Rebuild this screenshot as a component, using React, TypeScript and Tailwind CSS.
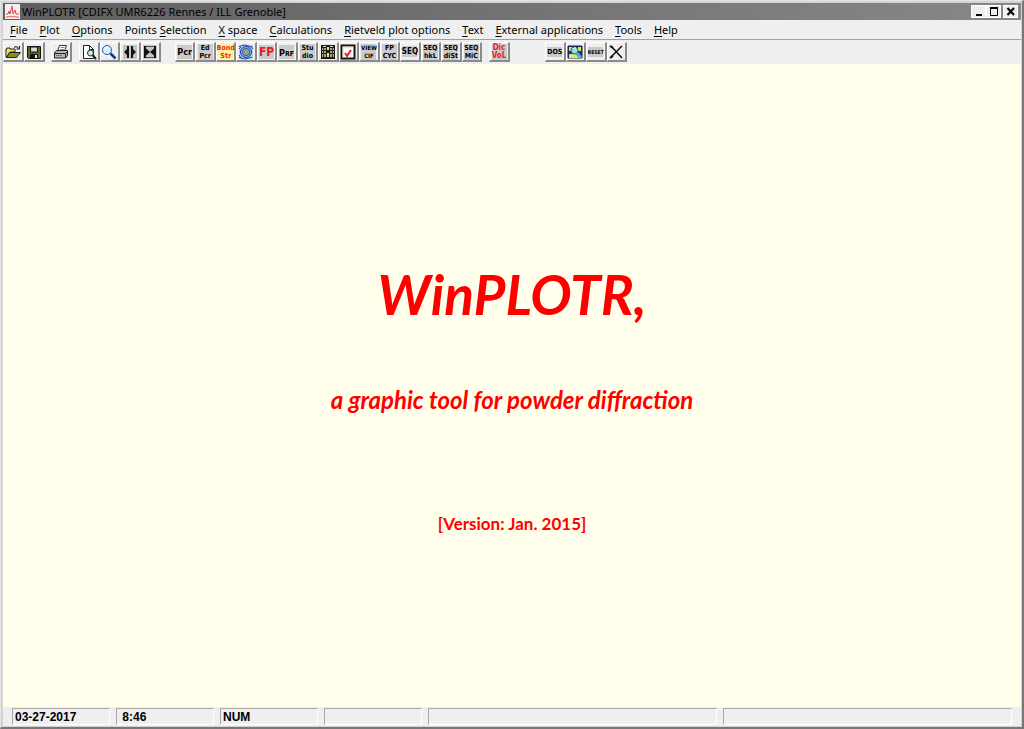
import type { ReactNode } from "react";
import clsx from "clsx";

type Tool = { name: string; icon: ReactNode };

const menus: [string, string, string][] = [
  ["", "F", "ile"],
  ["", "P", "lot"],
  ["", "O", "ptions"],
  ["Points ", "S", "election"],
  ["", "X", " space"],
  ["", "C", "alculations"],
  ["", "R", "ietveld plot options"],
  ["", "T", "ext"],
  ["", "E", "xternal applications"],
  ["", "T", "ools"],
  ["", "H", "elp"],
];

function Icon({ children }: { children: ReactNode }) {
  return (
    <svg viewBox="0 0 16 16" className="size-4" fill="none" aria-hidden="true">
      {children}
    </svg>
  );
}

function Label({ lines, className }: { lines: string[]; className?: string }) {
  return (
    <span
      className={clsx(
        "flex w-[15px] flex-col items-center justify-center font-['DejaVu_Sans_Condensed',sans-serif] font-bold",
        className ?? "h-4 bg-[#cbcbcb] text-[7px] leading-[8px]"
      )}
    >
      {lines.map((line) => (
        <span key={line}>{line}</span>
      ))}
    </span>
  );
}

const fileTools: Tool[] = [
  {
    name: "Open",
    icon: (
      <Icon>
        <path d="M1 13V5h1V4h3v1h5v3H5l-3 5z" fill="#e8e850" stroke="#222" />
        <path d="M1.5 13.500 4.500 8.500h11l-4 5z" fill="#8c8c1c" stroke="#222" />
        <path d="M9 3.500q2-2 4 0l1 1M14.500 2v3h-3" stroke="#111" />
      </Icon>
    ),
  },
  {
    name: "Save",
    icon: (
      <Icon>
        <path d="M1.500 2.500h13v12h-12l-1-1z" fill="#66661a" stroke="#111" />
        <path d="M4.500 3h7v5h-7z" fill="#d8d8d8" stroke="#111" />
        <path d="M4 10h8v4H4z" fill="#111" />
        <path d="M9 11h2v3H9z" fill="#eee" />
      </Icon>
    ),
  },
];

const printTools: Tool[] = [
  {
    name: "Print",
    icon: (
      <Icon>
        <path d="m4.500 7 2-5.500h7L11.500 7" fill="#fff" stroke="#333" />
        <path d="M7.500 3.500h4M7 5.500h4" stroke="#888" />
        <path d="M1.500 8.500 4 6.500h10.500v5l-2 2.500h-11z" fill="#b5b5b5" stroke="#222" />
        <path d="M1.500 9.500h11l2-2M12.500 10v4" stroke="#222" />
        <path d="M3 11.500h8" stroke="#777" />
        <path d="M9 11.500h2" stroke="#d8c83a" />
      </Icon>
    ),
  },
];

const viewTools: Tool[] = [
  {
    name: "Print preview",
    icon: (
      <Icon>
        <path d="M2.500 1.500h6l4 4v9h-10z" fill="#fff" stroke="#222" />
        <path d="M8.500 1.500v4h4" stroke="#222" />
        <circle cx="9.500" cy="9" r="3" fill="#b9eeee" stroke="#222" />
        <path d="m11.500 11 3.500 4" stroke="#222" strokeWidth="2" />
      </Icon>
    ),
  },
  {
    name: "Zoom",
    icon: (
      <Icon>
        <circle cx="6" cy="6" r="4.500" fill="#d5f4ff" stroke="#3152a0" />
        <path d="M4 5q1-2 3-2" stroke="#fff" />
        <path d="m9.500 9.500 5 5" stroke="#16318f" strokeWidth="2.500" />
      </Icon>
    ),
  },
  {
    name: "Expand",
    icon: (
      <Icon>
        <path d="M1 1h14v14H1z" fill="#c4c4c4" />
        <path d="M7 2v12H5v-3L2 8l3-3V2zM9 2v12h2v-3l3-3-3-3V2z" fill="#111" />
        <path d="M7 2h2v12H7z" fill="#c4c4c4" />
      </Icon>
    ),
  },
  {
    name: "Shrink",
    icon: (
      <Icon>
        <path d="M1 1h14v14H1z" fill="#c4c4c4" />
        <path d="M2 2h2v12H2zM12 2h2v12h-2z" fill="#111" />
        <path d="M4 4.500 8 8l-4 3.500zM12 4.500 8 8l4 3.500z" fill="#111" />
        <path d="M4 2h8v1H4zM4 13h8v1H4z" fill="#555" />
      </Icon>
    ),
  },
];

const programTools: Tool[] = [
  {
    name: "Edit PCR",
    icon: <Label lines={["Pcr"]} className="h-[14px] bg-[#cbcbcb] text-[9px] leading-[14px]" />,
  },
  { name: "EdPCR", icon: <Label lines={["Ed", "Pcr"]} /> },
  {
    name: "Bond_Str",
    icon: (
      <Label
        lines={["Bond", "Str"]}
        className="h-4 bg-[#fff29a] text-[7px] leading-[8px] text-[#e8281c]"
      />
    ),
  },
  {
    name: "Fourier",
    icon: (
      <Icon>
        <path d="M1 1h14v14H1z" fill="#b4d2d7" />
        <path d="M1 3q5-4 12 0M1 13q5 4 13 0M1 5l2-2M15 5l-2-3M1 11l3 4" stroke="#273fb4" />
        <circle cx="8" cy="8" r="5.500" fill="#74b6dc" stroke="#2636b8" />
        <circle cx="8" cy="8" r="3.500" fill="#74d2a0" stroke="#244cc5" />
        <circle cx="8" cy="8" r="1.500" fill="#e5d43c" stroke="#ca6543" />
      </Icon>
    ),
  },
  {
    name: "FullProf",
    icon: (
      <Label
        lines={["FP"]}
        className="h-[14px] bg-[#cbcbcb] text-[12px] leading-[14px] text-[#e51c2c]"
      />
    ),
  },
  {
    name: "PRF",
    icon: (
      <Icon>
        <path d="M0 1h15v14H0z" fill="#cbcbcb" />
        <text
          x="0"
          y="12"
          fill="#000"
          className="font-['DejaVu_Sans_Condensed',sans-serif] text-[9px] font-bold"
        >
          P<tspan className="text-[7px]">RF</tspan>
        </text>
      </Icon>
    ),
  },
  { name: "Studio", icon: <Label lines={["Stu", "dio"]} /> },
  {
    name: "Table",
    icon: (
      <Icon>
        <path d="M1 1h14v14H1z" fill="#1c1c18" />
        <path
          d="M2 4h4v2H2zM10 4h4v2h-4zM2 7h4v2H2zM10 7h4v2h-4zM2 10h4v3H2zM10 10h4v3h-4z"
          fill="#a9a781"
        />
        <path d="M3.500 4v9M12.500 4v9" stroke="#333" />
        <path d="M7 3h2v3H7zM7 9h2v4H7z" fill="#eee56f" />
        <path d="M3 2.500h3M10 2.500h3" stroke="#ddd" />
      </Icon>
    ),
  },
  {
    name: "Check",
    icon: (
      <Icon>
        <path d="M1.500 1.500h13v13h-13z" fill="#fff" stroke="#111" strokeWidth="2" />
        <path d="M3 13.500V3h10.500" stroke="#d8d3a0" />
        <path d="m5 9 2 3 4-6" stroke="#e21c26" strokeWidth="2" />
      </Icon>
    ),
  },
  {
    name: "View CIF",
    icon: <Label lines={["VIEW", "CIF"]} className="h-4 bg-[#cbcbcb] text-[6px] leading-[8px]" />,
  },
  { name: "FP cycles", icon: <Label lines={["FP", "CYC"]} /> },
  {
    name: "Sequential",
    icon: <Label lines={["SEQ"]} className="h-[11px] bg-[#cbcbcb] text-[8px] leading-[11px]" />,
  },
  { name: "Sequential hkl", icon: <Label lines={["SEQ", "hkL"]} /> },
  { name: "Sequential distances", icon: <Label lines={["SEQ", "diSt"]} /> },
  { name: "Sequential microstructure", icon: <Label lines={["SEQ", "MiC"]} /> },
];

const indexingTools: Tool[] = [
  {
    name: "DicVol",
    icon: (
      <Label
        lines={["Dic", "VoL"]}
        className="h-4 bg-[#cbcbcb] text-[8px] leading-[8px] text-[#e51c2c]"
      />
    ),
  },
];

const systemTools: Tool[] = [
  {
    name: "DOS",
    icon: <Label lines={["DOS"]} className="h-[10px] bg-[#cbcbcb] text-[7px] leading-[10px]" />,
  },
  {
    name: "Explorer",
    icon: (
      <Icon>
        <path d="M1 2h14v12H1z" fill="#162ca0" stroke="#222" />
        <path d="M2 3h5v4H2zM11 3h3v4h-3z" fill="#e4df64" />
        <path d="M2 10h7l3 4H2z" fill="#d9e878" />
        <circle cx="7.500" cy="6.500" r="3.500" fill="#88e6df" stroke="#1b5f75" />
        <path d="m10 9 4 5" stroke="#50b4b6" strokeWidth="3" />
        <path d="M6 5q1-2 3-1" stroke="#fff" />
      </Icon>
    ),
  },
  {
    name: "RESET",
    icon: <Label lines={["RESET"]} className="h-[10px] bg-[#cbcbcb] text-[5px] leading-[10px]" />,
  },
  {
    name: "Exit",
    icon: (
      <Icon>
        <path d="m3 2 11 12M14 2 3 13" stroke="#111" strokeWidth="1.500" />
        <path d="m2 2 3 2M2 14l3-2" stroke="#111" strokeWidth="2" />
      </Icon>
    ),
  },
];

function ToolGroup({ tools, className }: { tools: Tool[]; className: string }) {
  return (
    <div className={clsx("flex h-5 shrink-0", className)}>
      {tools.map((tool) => (
        <button
          key={tool.name}
          type="button"
          aria-label={tool.name}
          title={tool.name}
          className="flex min-w-0 flex-1 items-center justify-center overflow-hidden border border-r-2 border-b-2 border-t-white border-r-[#8b8b8b] border-b-[#8b8b8b] border-l-white bg-[#efefef]"
        >
          {tool.icon}
        </button>
      ))}
    </div>
  );
}

function WindowButton({ name, children }: { name: string; children: ReactNode }) {
  return (
    <button
      type="button"
      aria-label={name}
      className="flex h-[13px] w-[15px] items-center justify-center border border-white bg-[#eeeeee]"
    >
      <svg viewBox="0 0 11 11" className="size-[11px] shrink-0" fill="none" stroke="#000">
        {children}
      </svg>
    </button>
  );
}

function TitleBar() {
  return (
    <header className="flex h-[17px] items-center bg-linear-to-r from-[#5f5f5f] to-[#888888] pr-[3px] pl-[2px]">
      <svg viewBox="0 0 15 15" className="size-[15px]" fill="none" aria-hidden="true">
        <path d="M0 0h15v15H0z" fill="#f7eeee" />
        <path d="M1 10h2l1-3 1 3 2-8 1 8 2-4 1 4h3" stroke="#df4a50" />
        <path d="M1 13h3l1-1 2 1 2-1 1 1h4" stroke="#e45b60" />
      </svg>
      <h1 className="ml-[2px] flex-1 truncate text-[11px] leading-4 text-black">
        WinPLOTR [CDIFX UMR6226 Rennes / ILL Grenoble]
      </h1>
      <WindowButton name="Minimize">
        <path d="M3 9h6" strokeWidth="2" />
      </WindowButton>
      <WindowButton name="Maximize">
        <path d="M2 2.500h8M2.500 2v7.500h7V2" />
        <path d="M2 2h8" strokeWidth="2" />
      </WindowButton>
      <span className="w-[2px]" />
      <WindowButton name="Close">
        <path d="m2.500 2 6.500 7M9 2 2.500 9" strokeWidth="2" />
      </WindowButton>
    </header>
  );
}

function StatusCell({ children, className }: { children?: ReactNode; className?: string }) {
  return (
    <div
      className={clsx(
        "h-[17px] border border-t-[#a9a9a9] border-r-white border-b-white border-l-[#a9a9a9] px-[2px] font-['Liberation_Sans',sans-serif] text-[12px] leading-4 font-bold",
        className ?? "w-[98px]"
      )}
    >
      {children}
    </div>
  );
}

export default function App() {
  return (
    <div className="flex min-h-screen flex-col border-t border-r-2 border-b-2 border-l border-t-[#e4e4e4] border-r-[#777777] border-b-[#777777] border-l-[#e4e4e4] bg-[#efefef] font-['Noto_Sans',sans-serif] text-black">
      <div className="flex flex-1 flex-col border-t-2 border-r border-b border-l-2 border-[#d4d4d4]">
        <TitleBar />
        <nav className="flex h-5 items-center gap-3 border-b border-[#a0a0a0] px-[7px]">
          {menus.map(([before, key, after]) => (
            <button key={key + after} type="button" className="text-[11px] leading-4 whitespace-pre">
              {before}
              <span className="underline underline-offset-2">{key}</span>
              {after}
            </button>
          ))}
        </nav>
        <div className="flex h-6 items-center">
          <ToolGroup tools={fileTools} className="w-[42px]" />
          <ToolGroup tools={printTools} className="ml-[6px] w-[21px]" />
          <ToolGroup tools={viewTools} className="ml-[7px] w-[82px]" />
          <ToolGroup tools={programTools} className="ml-[14px] w-[307px]" />
          <ToolGroup tools={indexingTools} className="ml-[7px] w-[21px]" />
          <ToolGroup tools={systemTools} className="ml-[35px] w-[82px]" />
        </div>
        <main className="flex flex-1 flex-col items-center justify-center bg-[#ffffeb] pt-[26px] text-center font-['Lato',sans-serif] font-bold text-[#ff0000]">
          <h2 className="text-[55px] leading-[64px] italic">WinPLOTR,</h2>
          <p className="mt-[60px] text-[24px] leading-7 italic">
            a graphic tool for powder diffraction
          </p>
          <p className="mt-[98px] text-[17px] leading-6">[Version: Jan. 2015]</p>
        </main>
        <footer className="flex h-[19px] items-center gap-[6px] pr-[9px] pl-[9px]">
          <StatusCell>03-27-2017</StatusCell>
          <StatusCell>&nbsp;8:46</StatusCell>
          <StatusCell>NUM</StatusCell>
          <StatusCell />
          <StatusCell className="flex-1" />
          <StatusCell className="flex-1" />
        </footer>
      </div>
    </div>
  );
}
